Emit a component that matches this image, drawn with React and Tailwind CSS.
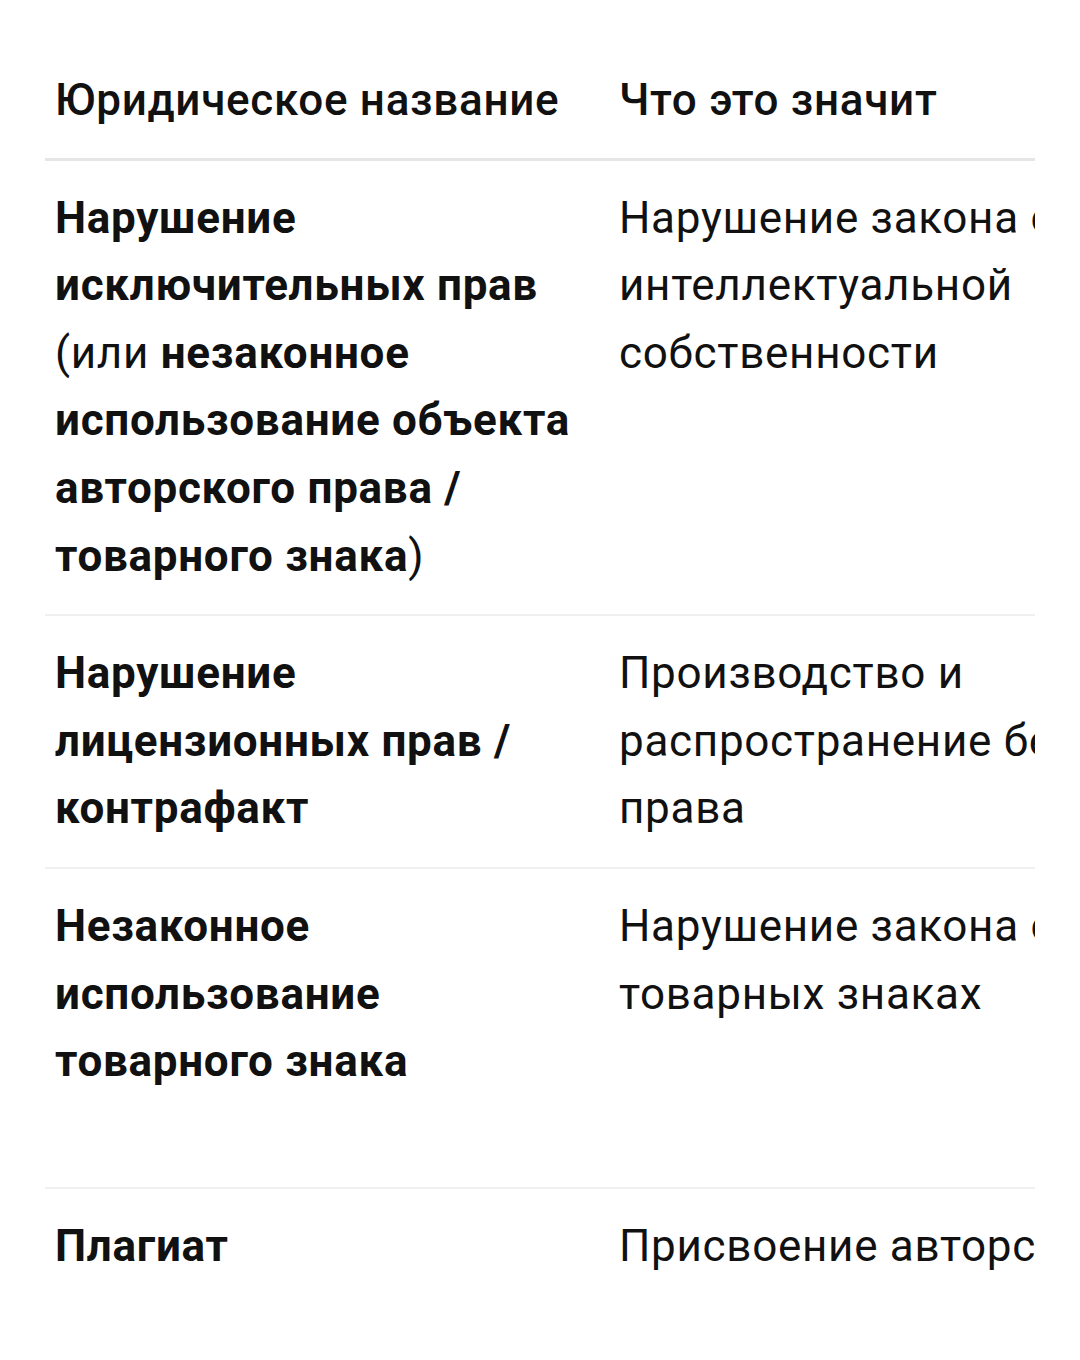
import React from "react";

const rows = [
  {
    name: (
      <>
        <b className="font-bold">Нарушение исключительных прав</b>{" "}
        <span>(или </span>
        <b className="font-bold">незаконное использование объекта авторского права / товарного знака</b>
        <span>)</span>
      </>
    ),
    meaning: "Нарушение закона об интеллектуальной собственности",
    extra: ["—", "", "", ""],
  },
  {
    name: <b className="font-bold">Нарушение лицензионных прав / контрафакт</b>,
    meaning: "Производство и распространение без права",
    extra: ["—"],
  },
  {
    name: <b className="font-bold">Незаконное использование товарного знака</b>,
    meaning: "Нарушение закона о товарных знаках",
    extra: ["—", "", "", ""],
  },
  {
    name: <b className="font-bold">Плагиат</b>,
    meaning: "Присвоение авторства",
    extra: ["—"],
  },
];

export default function App() {
  return (
    <div className="w-[1080px] h-[1360px] bg-white pt-[43px] px-[45px] text-[#111111] font-['Roboto','Liberation_Sans',sans-serif]">
      <div className="w-[990px] overflow-hidden">
        <table className="table-fixed border-collapse w-[1700px] text-[44px] leading-[67.6px] tracking-[0.016em]">
          <colgroup>
            <col className="w-[564px]" />
            <col className="w-[560px]" />
            <col className="w-[576px]" />
          </colgroup>
          <thead>
            <tr className="border-b-[3px] border-[#e6e6e6]">
              <th className="text-left font-medium pl-[10px] pr-[20px] pt-[24px] pb-[23px] align-top">Юридическое название</th>
              <th className="text-left font-medium px-[10px] pt-[24px] pb-[23px] align-top">Что это значит</th>
              <th className="text-left font-medium px-[10px] pt-[24px] pb-[23px] align-top whitespace-nowrap">Пример</th>
            </tr>
          </thead>
          <tbody>
            {rows.map((r, i) => (
              <tr key={i} className={i < rows.length - 1 ? "border-b-2 border-[#efefef]" : ""}>
                <td className="pl-[10px] pr-[20px] pt-[24px] pb-[24px] align-top">{r.name}</td>
                <td className="px-[10px] pt-[24px] pb-[24px] align-top">{r.meaning}</td>
                <td className="px-[10px] pt-[24px] pb-[24px] align-top whitespace-nowrap">
                  {r.extra.map((l, j) => (
                    <div key={j}>{l || "\u00a0"}</div>
                  ))}
                </td>
              </tr>
            ))}
          </tbody>
        </table>
      </div>
    </div>
  );
}
